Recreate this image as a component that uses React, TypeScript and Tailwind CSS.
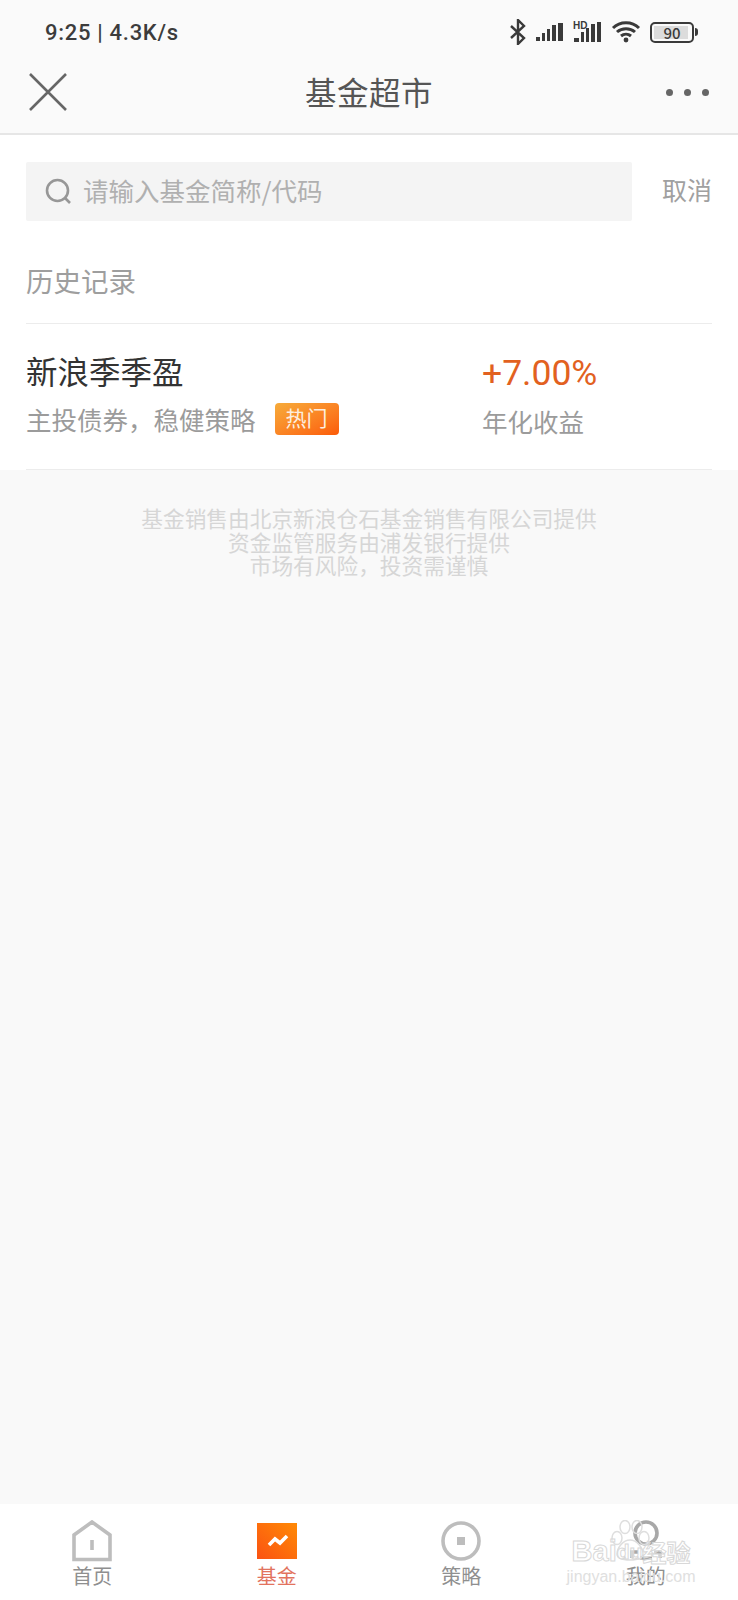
import React from "react";

const font = { fontFamily: '"Noto Sans CJK SC", "Noto Sans", sans-serif' };

function StatusIcons() {
  return (
    <div className="flex items-center gap-[9px]">
      <svg width="18" height="26" viewBox="0 0 18 26" fill="none" stroke="#3a3a3a" strokeWidth="2.4">
        <path d="M2 7l13 12-6 6V1l6 6L2 19" />
      </svg>
      <svg width="28" height="20" viewBox="0 0 28 20" fill="#3a3a3a">
        <rect x="0" y="15" width="4" height="4" /><rect x="6" y="11" width="3" height="8" /><rect x="11" y="7" width="3" height="12" /><rect x="16" y="3" width="4" height="16" /><rect x="22" y="1" width="5" height="18" />
      </svg>
      <svg width="29" height="24" viewBox="0 0 29 24" fill="#3a3a3a">
        <rect x="1" y="18" width="5" height="4" /><rect x="8" y="12" width="3" height="10" /><rect x="13" y="8" width="3" height="14" /><rect x="18" y="4" width="4" height="18" /><rect x="24" y="2" width="4" height="20" />
        <text x="0" y="9" fontSize="10" fontWeight="700" fontFamily="Liberation Sans">HD</text>
      </svg>
      <svg width="30" height="24" viewBox="0 0 30 24" fill="none" stroke="#3a3a3a" strokeWidth="3">
        <path d="M2 8c7-7 19-7 26 0M6 12c5-4.500 13-4.500 18 0M10 16c3-2.500 7-2.500 10 0" />
        <circle cx="15" cy="20" r="2.400" fill="#3a3a3a" stroke="none" />
      </svg>
      <div className="flex items-center">
        <div className="relative flex h-[21px] w-[44px] items-center justify-center overflow-hidden rounded-[5px] border-2 border-[#3a3a3a]">
          <div className="absolute bottom-[2px] left-[2px] top-[2px] w-[34px] bg-[#dcdcdc]" />
          <span className="relative text-[15px] font-medium leading-none text-[#3a3a3a]" style={font}>90</span>
        </div>
        <div className="ml-[1px] h-[8px] w-[3px] rounded-r-sm bg-[#3a3a3a]" />
      </div>
    </div>
  );
}

function Tab({ icon, label, active }: { icon: React.ReactNode; label: string; active?: boolean }) {
  return (
    <div className="flex w-[185px] flex-col items-center pt-[16px]">
      <div className="flex h-[42px] items-center justify-center">{icon}</div>
      <span className={`mt-[1px] text-[20px] leading-[26px] ${active ? "text-[#e2735e]" : "text-[#8f8f8f]"}`}>{label}</span>
    </div>
  );
}

export default function App() {
  return (
    <div className="relative flex h-[1600px] w-[738px] flex-col overflow-hidden bg-[#f9f9f9]" style={font}>
      <header className="h-[135px] shrink-0 border-b-2 border-[#e6e6e6] bg-[#fafafa]">
        <div className="flex h-[64px] items-center justify-between pl-[45px] pr-[40px]">
          <span className="text-[22px] font-medium tracking-[0.7px] text-[#3c3c3c]" style={{ fontFamily: '"Roboto", sans-serif' }}>9:25 | 4.3K/s</span>
          <StatusIcons />
        </div>
        <div className="relative flex h-[56px] items-center justify-between pl-[29px] pr-[29px]">
          <svg width="38" height="38" viewBox="0 0 38 38" stroke="#666" strokeWidth="2.600" fill="none">
            <path d="M1 1l36 36M37 1L1 37" />
          </svg>
          <span className="absolute left-0 right-0 text-center text-[31.500px] tracking-[0.500px] text-[#555]">基金超市</span>
          <div className="flex gap-[11px]">
            <div className="h-[7px] w-[7px] rounded-full bg-[#666]" />
            <div className="h-[7px] w-[7px] rounded-full bg-[#666]" />
            <div className="h-[7px] w-[7px] rounded-full bg-[#666]" />
          </div>
        </div>
      </header>

      <section className="bg-white px-[26px]">
        <div className="flex items-center justify-between pt-[27px]">
          <div className="flex h-[59px] w-[606px] items-center rounded-[2px] bg-[#f4f4f4] pl-[19px]">
            <svg width="27" height="27" viewBox="0 0 27 27" fill="none" stroke="#979797" strokeWidth="2.600">
              <circle cx="12.500" cy="12.500" r="10.500" />
              <path d="M20 20l5 5" />
            </svg>
            <span className="ml-[11px] pb-[3px] text-[25.500px] text-[#b0b0b0]">请输入基金简称/代码</span>
          </div>
          <span className="pb-[3px] text-[25px] text-[#a0a0a0]">取消</span>
        </div>
        <div className="flex h-[103px] items-center border-b border-[#ececec] pt-[18px] text-[27.500px] text-[#9e9e9e]">历史记录</div>
        <div className="flex h-[146px] border-b border-[#ececec]">
          <div className="w-[456px] pt-[22px]">
            <div className="text-[31.500px] leading-[48px] text-[#333]">新浪季季盈</div>
            <div className="mt-[5px] flex items-center text-[25.500px] leading-[40px] text-[#9b9b9b]">
              主投债券，稳健策略
              <span className="ml-[19px] flex h-[32px] w-[64px] items-center justify-center rounded-[4px] bg-gradient-to-br from-[#f6ab3a] to-[#fb5a06] pb-[4px] text-[21px] text-[#fdeede]">热门</span>
            </div>
          </div>
          <div className="pt-[25px]">
            <div className="text-[35.500px] leading-[48px] text-[#e2611f]" style={{ fontFamily: '"Roboto", sans-serif' }}>+7.00%</div>
            <div className="mt-[4px] text-[25.500px] leading-[40px] text-[#9b9b9b]">年化收益</div>
          </div>
        </div>
      </section>

      <div className="flex-1 pt-[36px] text-center text-[21.700px] leading-[23.500px] text-[#d6d6d6]">
        <div>基金销售由北京新浪仓石基金销售有限公司提供</div>
        <div>资金监管服务由浦发银行提供</div>
        <div>市场有风险，投资需谨慎</div>
      </div>

      <nav className="relative flex h-[96px] shrink-0 bg-white">
        <Tab
          label="首页"
          icon={
            <svg width="40" height="42" viewBox="0 0 40 42" fill="none" stroke="#bdbdbd" strokeWidth="3.600">
              <path d="M2 39.500V15L20 2l18 13v24.500z" />
              <path d="M20 20v10" />
            </svg>
          }
        />
        <Tab
          label="基金"
          active
          icon={
            <svg width="40" height="36" viewBox="0 0 40 36">
              <defs>
                <linearGradient id="g" x1="1" y1="0" x2="0" y2="1">
                  <stop offset="0" stopColor="#ff8a05" />
                  <stop offset="1" stopColor="#fb5212" />
                </linearGradient>
              </defs>
              <rect width="40" height="36" fill="url(#g)" />
              <path d="M12 22l6-6 5 4 7-7" fill="none" stroke="#fff" strokeWidth="3.600" />
            </svg>
          }
        />
        <Tab
          label="策略"
          icon={
            <svg width="40" height="40" viewBox="0 0 40 40" fill="none" stroke="#bdbdbd" strokeWidth="3.600">
              <circle cx="20" cy="20" r="18" />
              <rect x="16" y="16" width="8" height="8" fill="#bdbdbd" stroke="none" />
            </svg>
          }
        />
        <Tab
          label="我的"
          icon={
            <svg width="40" height="42" viewBox="0 0 40 42" fill="none" stroke="#a8a8a8" strokeWidth="3.600">
              <circle cx="20" cy="13" r="11" />
              <path d="M6 38v-6h6M34 38v-6h-6M14 38h12" />
            </svg>
          }
        />
        <div className="absolute left-[564px] top-[16px] flex h-[70px] w-[134px] flex-col items-center">
          <svg className="absolute left-[44px] top-[0px]" width="42" height="42" viewBox="0 0 42 42" fill="none" stroke="#dedede" strokeWidth="1.500">
            <ellipse cx="9" cy="18" rx="5" ry="6.500" />
            <ellipse cx="17" cy="7" rx="5" ry="6.500" />
            <ellipse cx="29" cy="7" rx="5" ry="6.500" />
            <ellipse cx="36" cy="18" rx="5" ry="6.500" />
            <path d="M22 20c-7 0-13 8-13 14 0 5 6 6 13 6s13-1 13-6c0-6-6-14-13-14z" />
          </svg>
          <div className="relative mt-[18px] flex items-end whitespace-nowrap text-[29px] font-bold leading-[27px] text-white/50 [-webkit-text-stroke:1px_#d8d8d8]" style={{ fontFamily: '"Liberation Sans", sans-serif' }}>
            <span>Bai</span>
            <span className="text-[21px]">du</span>
            <span className="text-[24px]" style={font}>经验</span>
          </div>
          <span className="mt-[3px] whitespace-nowrap text-[16px] leading-[18px] text-[#e0e0e0]" style={{ fontFamily: '"Liberation Sans", sans-serif' }}>jingyan.baidu.com</span>
        </div>
      </nav>
    </div>
  );
}
